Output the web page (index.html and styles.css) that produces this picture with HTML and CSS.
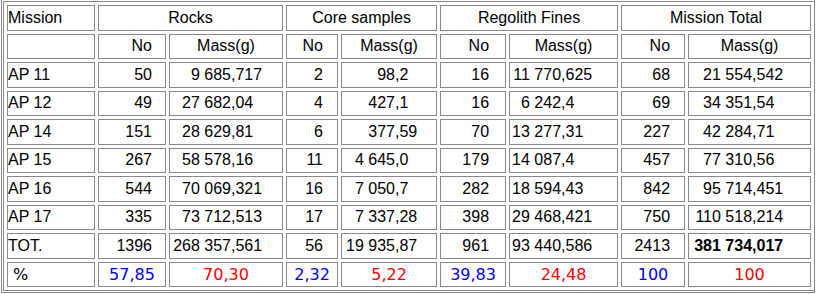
FILE: index.html
```html
<!DOCTYPE html>
<html>
<head>
<meta charset="utf-8">
<link rel="stylesheet" href="styles.css">
</head>
<body>
<div class="frame">
<table class="samples">
<colgroup>
<col class="w-mission"><col class="w-rn"><col class="w-rm"><col class="w-cn"><col class="w-cm"><col class="w-gn"><col class="w-gm"><col class="w-tn"><col class="w-tm">
</colgroup>
<tr>
<td class="name">Mission</td>
<td class="grp" colspan="2">Rocks</td>
<td class="grp" colspan="2">Core samples</td>
<td class="grp" colspan="2">Regolith Fines</td>
<td class="grp" colspan="2">Mission Total</td>
</tr>
<tr>
<td class="name"></td>
<td class="rn">No</td><td class="hm">Mass(g)</td>
<td class="cn">No</td><td class="hm">Mass(g)</td>
<td class="gn">No</td><td class="hm">Mass(g)</td>
<td class="tn">No</td><td class="hm">Mass(g)</td>
</tr>
<tr>
<td class="name">AP 11</td>
<td class="rn">50</td><td class="rm"><span class="int">9 685</span>,717</td>
<td class="cn">2</td><td class="cm"><span class="int">98</span>,2</td>
<td class="gn">16</td><td class="gm"><span class="int">11 770</span>,625</td>
<td class="tn">68</td><td class="tm"><span class="int">21 554</span>,542</td>
</tr>
<tr>
<td class="name">AP 12</td>
<td class="rn">49</td><td class="rm"><span class="int">27 682</span>,04</td>
<td class="cn">4</td><td class="cm"><span class="int">427</span>,1</td>
<td class="gn">16</td><td class="gm"><span class="int">6 242</span>,4</td>
<td class="tn">69</td><td class="tm"><span class="int">34 351</span>,54</td>
</tr>
<tr>
<td class="name">AP 14</td>
<td class="rn">151</td><td class="rm"><span class="int">28 629</span>,81</td>
<td class="cn">6</td><td class="cm"><span class="int">377</span>,59</td>
<td class="gn">70</td><td class="gm"><span class="int">13 277</span>,31</td>
<td class="tn">227</td><td class="tm"><span class="int">42 284</span>,71</td>
</tr>
<tr>
<td class="name">AP 15</td>
<td class="rn">267</td><td class="rm"><span class="int">58 578</span>,16</td>
<td class="cn">11</td><td class="cm"><span class="int">4 645</span>,0</td>
<td class="gn">179</td><td class="gm"><span class="int">14 087</span>,4</td>
<td class="tn">457</td><td class="tm"><span class="int">77 310</span>,56</td>
</tr>
<tr>
<td class="name">AP 16</td>
<td class="rn">544</td><td class="rm"><span class="int">70 069</span>,321</td>
<td class="cn">16</td><td class="cm"><span class="int">7 050</span>,7</td>
<td class="gn">282</td><td class="gm"><span class="int">18 594</span>,43</td>
<td class="tn">842</td><td class="tm"><span class="int">95 714</span>,451</td>
</tr>
<tr>
<td class="name">AP 17</td>
<td class="rn">335</td><td class="rm"><span class="int">73 712</span>,513</td>
<td class="cn">17</td><td class="cm"><span class="int">7 337</span>,28</td>
<td class="gn">398</td><td class="gm"><span class="int">29 468</span>,421</td>
<td class="tn">750</td><td class="tm"><span class="int">110 518</span>,214</td>
</tr>
<tr>
<td class="name">TOT.</td>
<td class="rn">1396</td><td class="rm"><span class="int">268 357</span>,561</td>
<td class="cn">56</td><td class="cm"><span class="int">19 935</span>,87</td>
<td class="gn">961</td><td class="gm"><span class="int">93 440</span>,586</td>
<td class="tn">2413</td><td class="tm total"><span class="int">381 734</span>,017</td>
</tr>
<tr class="pct">
<td class="name">&nbsp;%</td>
<td class="blue">57,85</td><td class="red">70,30</td>
<td class="blue">2,32</td><td class="red">5,22</td>
<td class="blue">39,83</td><td class="red">24,48</td>
<td class="blue">100</td><td class="red">100</td>
</tr>
</table>
</div>
</body>
</html>
```
FILE: styles.css
```css
html, body {
  margin: 0;
  padding: 0;
  background: #fff;
  overflow: hidden;
}
body {
  font-family: "Liberation Sans", Arial, sans-serif;
  font-size: 16px;
  color: #000;
}
.frame {
  margin-left: 1px;
  width: 814px;
  padding: 1px 0 1px 1px;
  border-left: 1px solid #888;
  border-right: 1px solid #888;
  border-bottom: 1px solid #888;
  box-sizing: border-box;
  height: 293px;
}
.samples {
  table-layout: fixed;
  width: 812px;
  border-collapse: separate;
  border-spacing: 3px;
  border: 1px solid #888;
}
.w-mission { width: 88px; }
.w-rn { width: 68px; }
.w-rm { width: 114px; }
.w-cn { width: 52px; }
.w-cm { width: 96px; }
.w-gn { width: 66px; }
.w-gm { width: 109px; }
.w-tn { width: 64px; }
.w-tm { width: 123px; }
.samples td {
  box-sizing: border-box;
  height: 25.5px;
  padding: 0;
  border: 1px solid #888;
  white-space: nowrap;
  text-align: center;
  vertical-align: middle;
}
.samples td.name { text-align: left; padding-left: 0; }
.samples td.rn { text-align: right; padding-right: 13px; }
.samples td.cn { text-align: right; padding-right: 14px; }
.samples td.gn { text-align: right; padding-right: 16px; }
.samples td.tn { text-align: right; padding-right: 14px; }
.samples td.rm,
.samples td.cm,
.samples td.gm,
.samples td.tm { text-align: left; }
.int {
  display: inline-block;
  text-align: right;
}
.rm .int { width: 61px; }
.cm .int { width: 53px; }
.gm .int { width: 51px; }
.tm .int { width: 63px; }
.total { font-weight: bold; }
.pct td {
  font-family: "DejaVu Sans", Verdana, sans-serif;
  font-size: 16px;
}
.samples td.blue { color: #0000ff; }
.samples td.red { color: #ff0000; }
```
